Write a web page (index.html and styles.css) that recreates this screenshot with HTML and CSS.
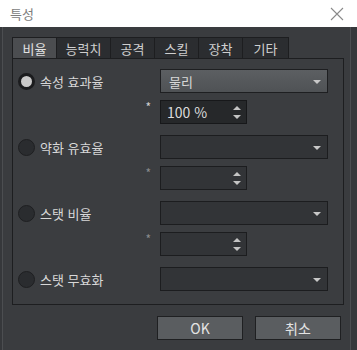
FILE: index.html
```html
<!DOCTYPE html>
<html lang="ko">

<head>
    <meta charset="UTF-8">
    <title>특성</title>
    <link rel="stylesheet" href="styles.css">
</head>

<body>

    <div class="titlebar">
        <span class="title">특성</span>
        <svg class="close" width="14" height="14" viewBox="0 0 14 14">
            <path d="M1 1 L13 13 M13 1 L1 13" stroke="#8a8a8a" stroke-width="1.1" fill="none" />
        </svg>
    </div>

    <div class="dialog">
        <div class="tabs">
            <div class="tab active">비율</div>
            <div class="tab">능력치</div>
            <div class="tab">공격</div>
            <div class="tab">스킬</div>
            <div class="tab">장착</div>
            <div class="tab">기타</div>
        </div>

        <div class="panel">
            <div class="group">
                <div class="row">
                    <div class="option"><span class="radio checked"></span>속성 효과율</div>
                    <div class="combo selected">물리<span class="caret"></span></div>
                </div>
                <div class="subrow">
                    <span class="star">*</span>
                    <div class="spin">100 %<span class="arrows"><span class="up"></span><span class="down"></span></span></div>
                </div>
            </div>

            <div class="group">
                <div class="row">
                    <div class="option"><span class="radio"></span>약화 유효율</div>
                    <div class="combo"><span class="caret"></span></div>
                </div>
                <div class="subrow">
                    <span class="star dim">*</span>
                    <div class="spin off"><span class="arrows"><span class="up"></span><span class="down"></span></span></div>
                </div>
            </div>

            <div class="group">
                <div class="row">
                    <div class="option"><span class="radio"></span>스탯 비율</div>
                    <div class="combo"><span class="caret"></span></div>
                </div>
                <div class="subrow">
                    <span class="star dim">*</span>
                    <div class="spin off"><span class="arrows"><span class="up"></span><span class="down"></span></span></div>
                </div>
            </div>

            <div class="group">
                <div class="row">
                    <div class="option"><span class="radio"></span>스탯 무효화</div>
                    <div class="combo"><span class="caret"></span></div>
                </div>
            </div>
        </div>

        <div class="buttons">
            <div class="button">OK</div>
            <div class="button">취소</div>
        </div>
    </div>

</body>

</html>
```

FILE: styles.css
```css
body,
html {
    margin: 0;
    padding: 0;
    height: 100%;
    width: 100%;
    overflow: hidden;
    background-color: #36383b;
    font-family: "Noto Sans CJK KR", "Noto Sans", sans-serif;
    font-size: 13px;
    color: #d6d6d6;
}

.titlebar {
    height: 27px;
    background-color: #fff;
    display: flex;
    align-items: center;
    justify-content: space-between;
    padding: 0 13px 0 10px;
}

.title {
    color: #7c7c7c;
    font-size: 13px;
}

.dialog {
    height: 323px;
    box-sizing: border-box;
    margin: 0 6px 0 2px;
    padding: 10px 6px 0 9px;
    background-color: #3a3c3f;
    border-left: 1px solid #4c4e51;
    border-right: 1px solid #4c4e51;
}

.tabs {
    display: flex;
    height: 21px;
}

.tab {
    display: flex;
    align-items: center;
    justify-content: center;
    box-sizing: border-box;
    width: 45px;
    height: 21px;
    background-color: #2b2d30;
    border: 1px solid #1d1e20;
    border-bottom: none;
    margin-right: -1px;
    color: #cfcfcf;
}

.tab:nth-child(2) {
    width: 55px;
}

.tab:nth-child(6) {
    width: 47px;
}

.tab.active {
    background-color: #4b4d50;
    color: #e2e2e2;
}

.panel {
    height: 247px;
    box-sizing: border-box;
    border: 1px solid #1d1e20;
    padding: 10px 15px 0 5px;
    background-color: #3b3d40;
}

.group {
    margin-bottom: 11px;
}

.row {
    display: flex;
    align-items: center;
    height: 24px;
}

.option {
    width: 142px;
    display: flex;
    align-items: center;
    color: #d8d8d8;
}

.radio {
    width: 17px;
    height: 17px;
    box-sizing: border-box;
    border-radius: 50%;
    background-color: #2a2c2f;
    border: 1px solid #1e1f21;
    margin-right: 5px;
}

.radio.checked {
    background-color: #cacaca;
    border: 3px solid #1b1c1e;
}

.combo {
    flex: 1;
    height: 24px;
    box-sizing: border-box;
    display: flex;
    align-items: center;
    padding-left: 8px;
    position: relative;
    background-color: #323437;
    border: 1px solid #1c1d1f;
    color: #d8d8d8;
}

.combo.selected {
    background: linear-gradient(#5c5f62, #4f5255);
    border-color: #1e1f21;
}

.caret {
    position: absolute;
    right: 6px;
    top: 10px;
    border-left: 4px solid transparent;
    border-right: 4px solid transparent;
    border-top: 4px solid #c8c8c8;
}

.subrow {
    display: flex;
    align-items: center;
    margin-top: 7px;
    height: 24px;
}

.star {
    width: 142px;
    box-sizing: border-box;
    text-align: right;
    padding-right: 9px;
    color: #d0d0d0;
    font-size: 12px;
    align-self: flex-start;
    line-height: 14px;
}

.star.dim {
    color: #8a8b8d;
}

.spin {
    width: 87px;
    height: 24px;
    box-sizing: border-box;
    display: flex;
    align-items: center;
    padding-left: 6px;
    position: relative;
    background-color: #26282a;
    border: 1px solid #17181a;
    font-size: 14px;
    color: #dcdcdc;
}

.spin.off {
    background-color: #323437;
    border-color: #1c1d1f;
}

.arrows {
    position: absolute;
    right: 5px;
    top: 5px;
    display: flex;
    flex-direction: column;
    gap: 5px;
}

.up {
    border-left: 4px solid transparent;
    border-right: 4px solid transparent;
    border-bottom: 4px solid #c4c4c4;
}

.down {
    border-left: 4px solid transparent;
    border-right: 4px solid transparent;
    border-top: 4px solid #c4c4c4;
}

.buttons {
    display: flex;
    justify-content: flex-end;
    gap: 12px;
    margin-top: 11px;
    margin-right: 3px;
}

.button {
    width: 86px;
    height: 24px;
    box-sizing: border-box;
    display: flex;
    align-items: center;
    justify-content: center;
    background-color: #5a5d60;
    border: 1px solid #1f2022;
    color: #e4e4e4;
    font-size: 14px;
}
```
